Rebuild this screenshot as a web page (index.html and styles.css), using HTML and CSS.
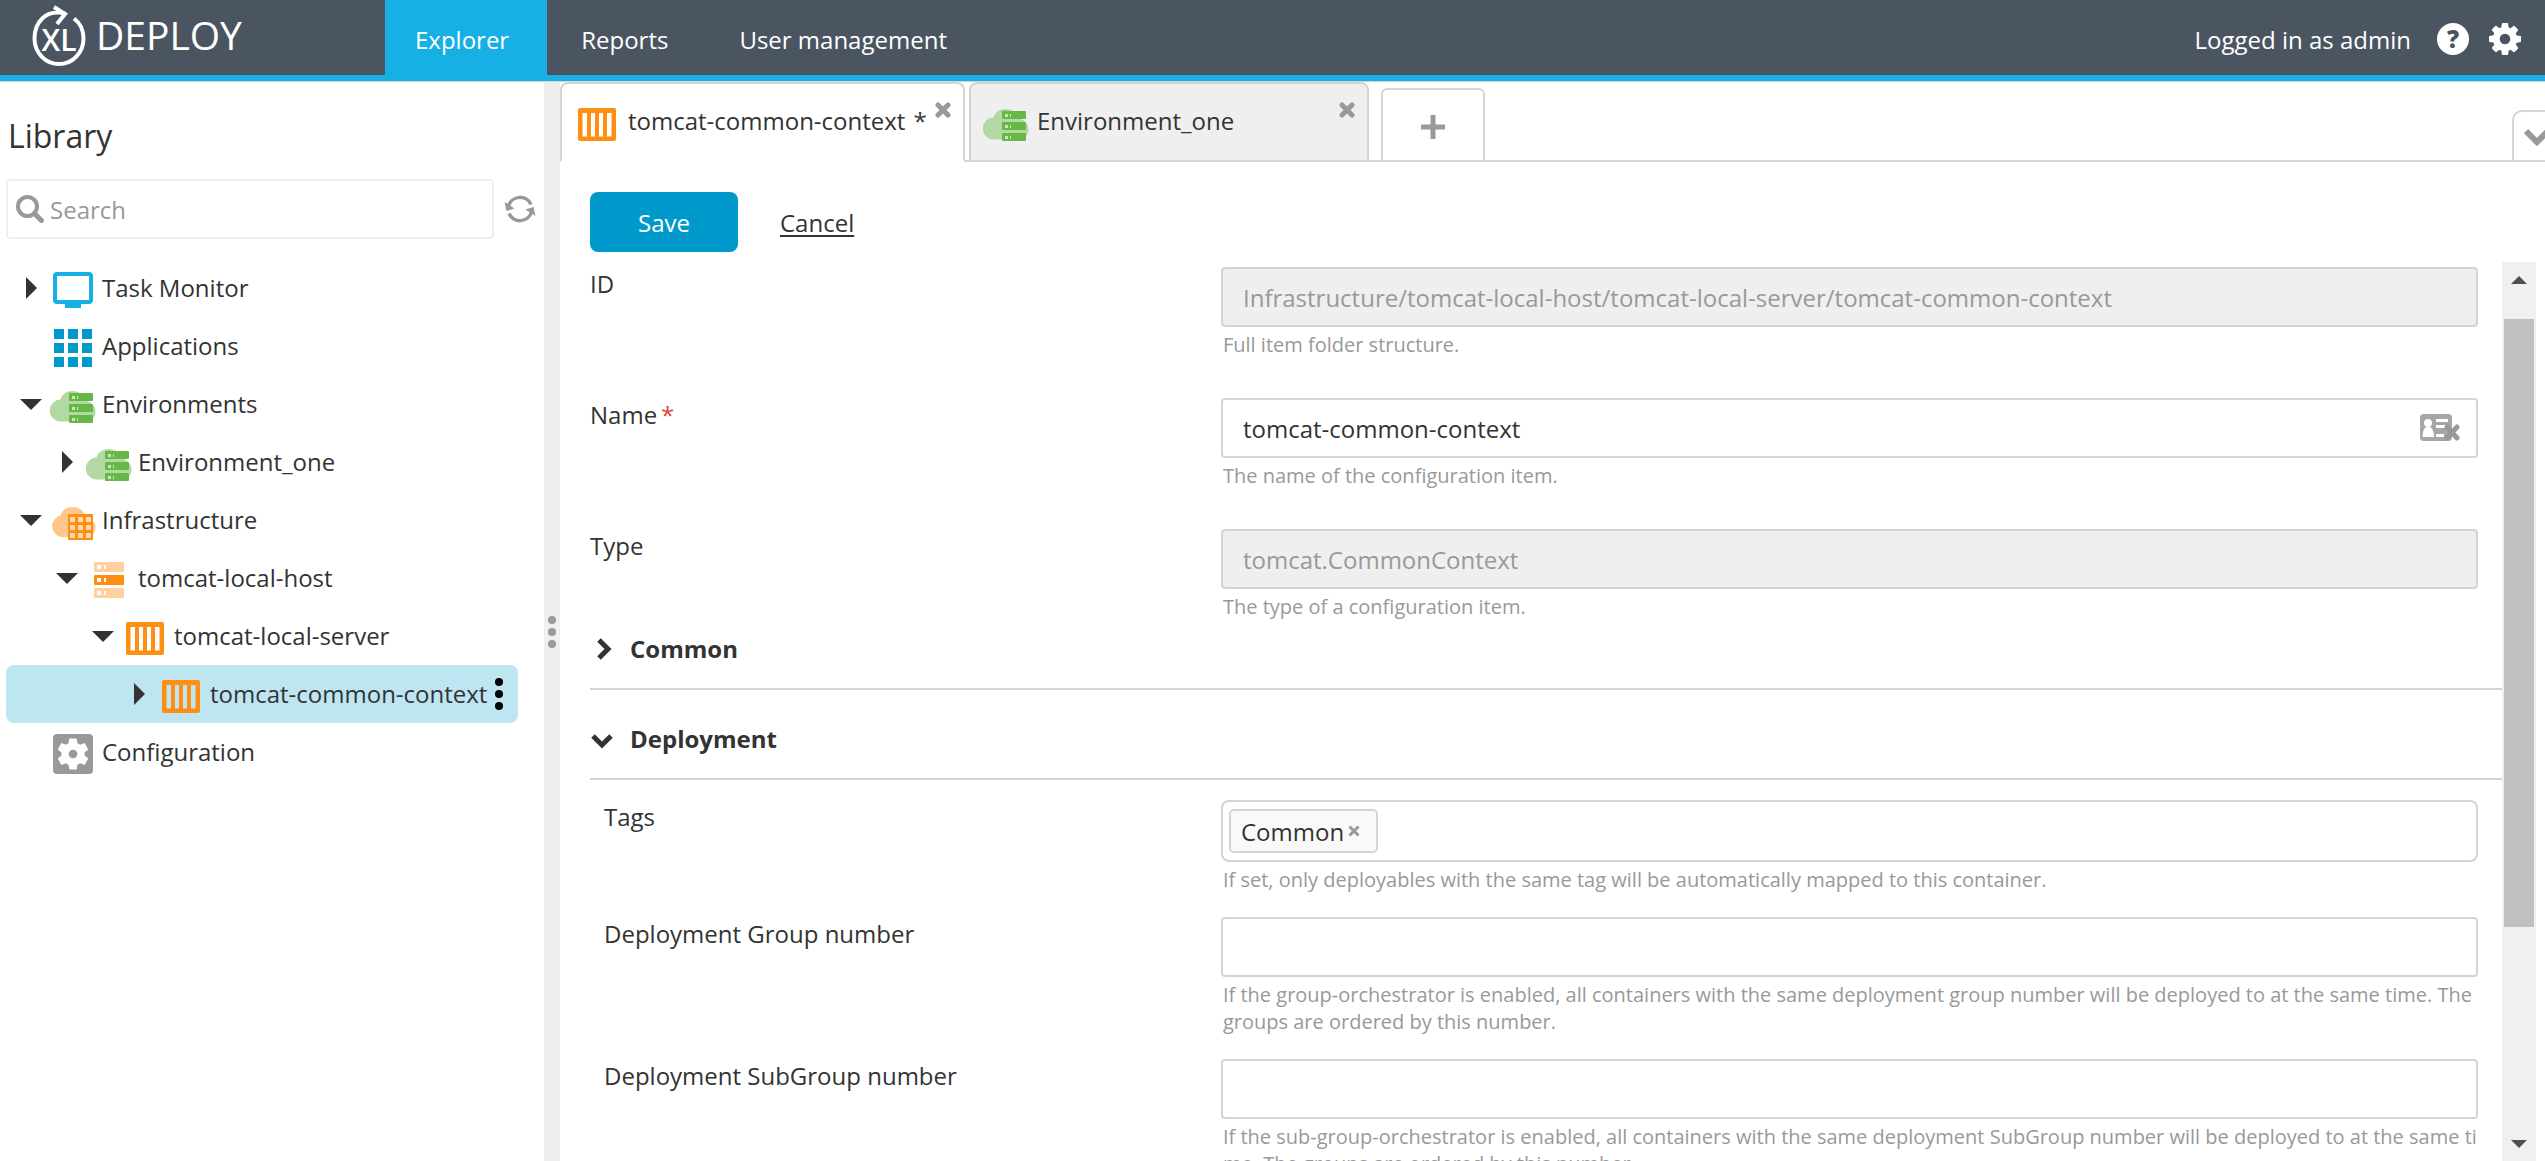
FILE: index.html
```html
<!DOCTYPE html>
<html lang="en">
<head>
<meta charset="utf-8">
<title>XL Deploy</title>
<link rel="stylesheet" href="styles.css">
</head>
<body>
<svg class="sprite" aria-hidden="true">
  <symbol id="i-monitor" viewBox="0 0 46 44">
    <rect x="5" y="8" width="36" height="28" rx="2" fill="none" stroke="#16b0e4" stroke-width="4"/>
    <path d="M15 37h16v5H15z" fill="#16b0e4"/>
  </symbol>
  <symbol id="i-apps" viewBox="0 0 46 44">
    <path fill="#0099cc" d="M4 5h10v10H4zM18 5h10v10H18zM32 5h10v10H32zM4 19h10v10H4zM18 19h10v10H18zM32 19h10v10H32zM4 33h10v10H4zM18 33h10v10H18zM32 33h10v10H32z"/>
  </symbol>
  <symbol id="i-env" viewBox="0 0 46 44">
    <path fill="#b1d9a1" d="M11 39.500A11 11 0 0 1 10.500 17.500C12 12 17 9 22.500 9C29 9 34 12.500 35 18.500C41 19 45.500 24 45.500 29.500C45.500 35 41 39.500 36 39.500z"/>
    <path fill="#68b749" d="M20 11h22a1 1 0 0 1 1 1v6a1 1 0 0 1-1 1H20a1 1 0 0 1-1-1v-6a1 1 0 0 1 1-1zM20 22h22a1 1 0 0 1 1 1v6a1 1 0 0 1-1 1H20a1 1 0 0 1-1-1v-6a1 1 0 0 1 1-1zM20 33h22a1 1 0 0 1 1 1v6a1 1 0 0 1-1 1H20a1 1 0 0 1-1-1v-6a1 1 0 0 1 1-1z"/>
    <path fill="#c9e6be" d="M22 14h3v3h-3zM27 14h1v3h-1zM22 25h3v3h-3zM27 25h1v3h-1zM22 36h3v3h-3zM27 36h1v3h-1z"/>
  </symbol>
  <symbol id="i-infra" viewBox="0 0 46 44">
    <path fill="#ffc68a" d="M11 39A11 11 0 0 1 10.500 17.500C12 12 17 9 22.500 9C29 9 34 12.500 35 18.500C41 19 45.500 24 45.500 29.500C45.500 35 41 39 36 39z"/>
    <rect x="18" y="16" width="25" height="26" rx="1" fill="#ff8f12"/>
    <path fill="#ffd9b0" d="M20 19h5v5h-5zM28 19h5v5h-5zM36 19h5v5h-5zM20 27h5v5h-5zM28 27h5v5h-5zM36 27h5v5h-5zM20 35h5v5h-5zM28 35h5v5h-5zM36 35h5v5h-5z"/>
  </symbol>
  <symbol id="i-host" viewBox="0 0 46 44">
    <rect x="8" y="6" width="30" height="10" rx="1" fill="#ffd0a0"/>
    <rect x="8" y="19" width="30" height="10" rx="1" fill="#ff8f12"/>
    <rect x="8" y="32" width="30" height="10" rx="1" fill="#ffd0a0"/>
    <path fill="#fff" d="M11 9h4v4h-4zM18 9h2v4h-2zM11 22h4v4h-4zM18 22h2v4h-2zM11 35h4v4h-4zM18 35h2v4h-2z"/>
  </symbol>
  <symbol id="i-container" viewBox="0 0 46 44">
    <path fill="#ff8f12" fill-rule="evenodd" d="M6 8h34a2 2 0 0 1 2 2v29a2 2 0 0 1-2 2H6a2 2 0 0 1-2-2V10a2 2 0 0 1 2-2zM8.500 13v23.500h4.500V13zM17 13v23.500h4V13zM25 13v23.500h4V13zM33 13v23.500h4.500V13z"/>
  </symbol>
  <symbol id="i-config" viewBox="0 0 46 44">
    <rect x="3" y="4" width="40" height="40" rx="4" fill="#999"/>
    <path fill="#fff" transform="translate(4.400 5.400) scale(1.550)" d="M19.430 12.980c.04-.32.07-.64.07-.98s-.03-.66-.07-.98l2.110-1.650c.19-.15.24-.42.12-.64l-2-3.460c-.12-.22-.39-.3-.61-.22l-2.490 1c-.52-.4-1.080-.73-1.690-.98l-.38-2.650C14.460 2.180 14.250 2 14 2h-4c-.25 0-.46.18-.49.42l-.38 2.650c-.61.25-1.170.59-1.690.98l-2.490-1c-.23-.09-.49 0-.61.22l-2 3.460c-.13.22-.07.49.12.64l2.110 1.650c-.04.32-.07.65-.07.98s.03.66.07.98l-2.110 1.650c-.19.15-.24.42-.12.64l2 3.460c.12.22.39.3.61.22l2.490-1c.52.4 1.080.73 1.690.98l.38 2.650c.03.24.24.42.49.42h4c.25 0 .46-.18.49-.42l.38-2.650c.61-.25 1.170-.59 1.690-.98l2.490 1c.23.09.49 0 .61-.22l2-3.460c.12-.22.07-.49-.12-.64l-2.110-1.650zM12 14.800a2.800 2.800 0 1 1 0-5.600 2.800 2.800 0 0 1 0 5.600z"/>
  </symbol>
  <symbol id="i-right" viewBox="0 0 26 24"><path d="M8 1l11 11L8 23z" fill="#333"/></symbol>
  <symbol id="i-down" viewBox="0 0 26 24"><path d="M2 7h22L13 18z" fill="#333"/></symbol>
  <symbol id="i-close" viewBox="0 0 16 16"><path d="M3 3l10 10M13 3L3 13" stroke="#999" stroke-width="5" stroke-linecap="round"/></symbol>
</svg>

<header class="topbar">
  <a class="brand" href="#" aria-label="XL Deploy">
    <svg class="brand-mark" width="56" height="62" viewBox="0 0 56 62" aria-hidden="true">
      <path d="M34 8.500C14 4 3.500 18 3.500 33.500a24.500 25.500 0 0 0 49 0C52.500 25 49 18 43 13.500" fill="none" stroke="#fff" stroke-width="4"/>
      <path d="M23 2L34 9L26 19" fill="none" stroke="#fff" stroke-width="4"/>
      <text x="28" y="46" text-anchor="middle" class="mark-text">XL</text>
    </svg>
    <span class="brand-name">DEPLOY</span>
  </a>
  <nav class="mainnav">
    <a class="mainnav-link is-active" href="#">Explorer</a>
    <a class="mainnav-link" href="#">Reports</a>
    <a class="mainnav-link" href="#">User management</a>
  </nav>
  <div class="account">
    <span>Logged in as admin</span>
    <button class="icon-btn" aria-label="Help">
      <svg width="32" height="32" viewBox="0 0 32 32"><circle cx="16" cy="16" r="16" fill="#fff"/><text x="16" y="25" text-anchor="middle" class="help-mark">?</text></svg>
    </button>
    <button class="icon-btn" aria-label="Settings">
      <svg width="32" height="32" viewBox="128 128 1536 1536"><path fill="#fff" d="M1152 896q0-106-75-181t-181-75-181 75-75 181 75 181 181 75 181-75 75-181zm512-109v222q0 12-8 23t-20 13l-185 28q-19 54-39 91 35 50 107 138 10 12 10 25t-9 23q-27 37-99 108t-94 71q-12 0-26-9l-138-108q-44 23-91 38-16 136-29 186-7 28-36 28h-222q-14 0-24.500-8.500t-11.500-21.500l-28-184q-49-16-90-37l-141 107q-10 9-25 9-14 0-25-11-126-114-165-168-7-10-7-23 0-12 8-23 15-21 51-66.500t54-70.500q-27-50-41-99l-183-27q-13-2-21-12.500t-8-23.500v-222q0-12 8-23t19-13l186-28q14-46 39-92-40-57-107-138-10-12-10-24 0-10 9-23 26-36 98.500-107.500t94.500-71.500q13 0 26 10l138 107q44-23 91-38 16-136 29-186 7-28 36-28h222q14 0 24.500 8.500t11.500 21.500l28 184q49 16 90 37l142-107q9-9 24-9 13 0 25 10 129 119 165 170 7 8 7 22 0 12-8 23-15 21-51 66.500t-54 70.500q26 50 41 98l183 28q13 2 21 12.500t8 23.500z"/></svg>
    </button>
  </div>
</header>

<div class="workspace">
  <aside class="sidebar">
    <h1 class="sidebar-title">Library</h1>
    <div class="search-row">
      <label class="search">
        <svg width="28" height="28" viewBox="0 0 28 28" aria-hidden="true"><circle cx="11.500" cy="11.500" r="9.500" fill="none" stroke="#999" stroke-width="4"/><path d="M18.500 18.500l7 7" stroke="#999" stroke-width="5" stroke-linecap="round"/></svg>
        <input type="search" placeholder="Search" aria-label="Search">
      </label>
      <button class="icon-btn" aria-label="Refresh">
        <svg width="32" height="28" viewBox="0 0 32 28"><path d="M4.500 11A12 12 0 0 1 27 9.500M27.500 17A12 12 0 0 1 5 18.500" fill="none" stroke="#999" stroke-width="3.500"/><path d="M0.500 7l2 9 8-2.500zM31.500 21l-2-9-8 2.500z" fill="#999"/></svg>
      </button>
    </div>
    <ul class="tree">
      <li class="node level-0"><svg class="toggle"><use href="#i-right"/></svg><svg class="node-icon"><use href="#i-monitor"/></svg><span>Task Monitor</span></li>
      <li class="node level-0"><span class="toggle"></span><svg class="node-icon"><use href="#i-apps"/></svg><span>Applications</span></li>
      <li class="node level-0"><svg class="toggle"><use href="#i-down"/></svg><svg class="node-icon"><use href="#i-env"/></svg><span>Environments</span></li>
      <li class="node level-1"><svg class="toggle"><use href="#i-right"/></svg><svg class="node-icon"><use href="#i-env"/></svg><span>Environment_one</span></li>
      <li class="node level-0"><svg class="toggle"><use href="#i-down"/></svg><svg class="node-icon"><use href="#i-infra"/></svg><span>Infrastructure</span></li>
      <li class="node level-1"><svg class="toggle"><use href="#i-down"/></svg><svg class="node-icon"><use href="#i-host"/></svg><span>tomcat-local-host</span></li>
      <li class="node level-2"><svg class="toggle"><use href="#i-down"/></svg><svg class="node-icon"><use href="#i-container"/></svg><span>tomcat-local-server</span></li>
      <li class="node level-3 is-selected"><svg class="toggle"><use href="#i-right"/></svg><svg class="node-icon"><use href="#i-container"/></svg><span>tomcat-common-context</span>
        <button class="icon-btn node-menu" aria-label="Item menu"><svg width="8" height="34" viewBox="0 0 8 34"><circle cx="4" cy="5" r="4"/><circle cx="4" cy="17" r="4"/><circle cx="4" cy="29" r="4"/></svg></button></li>
      <li class="node level-0"><span class="toggle"></span><svg class="node-icon"><use href="#i-config"/></svg><span>Configuration</span></li>
    </ul>
  </aside>

  <div class="splitter"><svg width="8" height="32" viewBox="0 0 8 32"><g fill="#999"><circle cx="4" cy="4" r="4"/><circle cx="4" cy="16" r="4"/><circle cx="4" cy="28" r="4"/></g></svg></div>

  <main class="editor">
    <div class="tabs">
      <div class="tab is-current"><svg class="node-icon"><use href="#i-container"/></svg><span class="tab-title">tomcat-common-context <span class="dirty">*</span></span><button class="icon-btn tab-close" aria-label="Close"><svg width="16" height="16"><use href="#i-close"/></svg></button></div>
      <div class="tab"><svg class="node-icon"><use href="#i-env"/></svg><span class="tab-title">Environment_one</span><button class="icon-btn tab-close" aria-label="Close"><svg width="16" height="16"><use href="#i-close"/></svg></button></div>
      <button class="tab-add" aria-label="New tab"><svg width="24" height="24" viewBox="0 0 24 24"><path d="M12 0v24M0 12h24" stroke="#999" stroke-width="5"/></svg></button>
      <button class="tab-more" aria-label="More tabs"><svg width="26" height="18" viewBox="0 0 26 18"><path d="M2 3l11 11L24 3" fill="none" stroke="#999" stroke-width="6"/></svg></button>
    </div>

    <form class="form">
      <div class="actions">
        <button class="save" type="button">Save</button>
        <a class="cancel" href="#">Cancel</a>
      </div>
      <div class="scroller">
        <div class="fields">
          <div class="group">
            <div class="field">
              <label for="id">ID</label>
              <div class="control"><input class="box" id="id" value="Infrastructure/tomcat-local-host/tomcat-local-server/tomcat-common-context" disabled><p class="help">Full item folder structure.</p></div>
            </div>
            <div class="field">
              <label for="name">Name<span class="required">*</span></label>
              <div class="control">
                <div class="with-icon"><input class="box" id="name" value="tomcat-common-context">
                  <svg class="card-icon" width="40" height="28" viewBox="0 0 40 28" aria-hidden="true"><rect width="32" height="27" rx="4" fill="#a6a6a6"/><circle cx="8" cy="9" r="4" fill="#fff"/><path d="M2.500 23C2.500 17 4.500 14 6 13h4c2 1 4 4 4 10zM16 5h12v3H16zM16 11h10v3H16zM16 20h8v3h-8z" fill="#fff"/><path d="M27 13l10 11M37 13L27 24" stroke="#999" stroke-width="5" stroke-linecap="round"/></svg>
                </div>
                <p class="help">The name of the configuration item.</p></div>
            </div>
            <div class="field">
              <label for="type">Type</label>
              <div class="control"><input class="box" id="type" value="tomcat.CommonContext" disabled><p class="help">The type of a configuration item.</p></div>
            </div>
          </div>

          <h2 class="section"><button type="button" aria-expanded="false"><svg width="24" height="24" viewBox="0 0 24 24"><path d="M9 3l9 9-9 9" fill="none" stroke="#333" stroke-width="5"/></svg>Common</button></h2>
          <h2 class="section"><button type="button" aria-expanded="true"><svg width="24" height="24" viewBox="0 0 24 24"><path d="M3 9l9 9 9-9" fill="none" stroke="#333" stroke-width="5"/></svg>Deployment</button></h2>

          <div class="group nested">
            <div class="field">
              <label for="tags">Tags</label>
              <div class="control">
                <div class="box tagbox"><span class="tag">Common<button class="icon-btn" type="button" aria-label="Remove Common"><svg width="12" height="12" viewBox="0 0 12 12"><path d="M1.500 1.500l9 9M10.500 1.500l-9 9" stroke="#999" stroke-width="3"/></svg></button></span><input id="tags"></div>
                <p class="help">If set, only deployables with the same tag will be automatically mapped to this container.</p></div>
            </div>
            <div class="field">
              <label for="grp">Deployment Group number</label>
              <div class="control"><input class="box" id="grp"><p class="help">If the group-orchestrator is enabled, all containers with the same deployment group number will be deployed to at the same time. The groups are ordered by this number.</p></div>
            </div>
            <div class="field">
              <label for="sub">Deployment SubGroup number</label>
              <div class="control"><input class="box" id="sub"><p class="help">If the sub-group-orchestrator is enabled, all containers with the same deployment SubGroup number will be deployed to at the same time. The groups are ordered by this number.</p></div>
            </div>
          </div>
        </div>
        <div class="scrollbar" aria-hidden="true">
          <svg width="16" height="8"><path d="M0 8L8 0l8 8z" fill="#505050"/></svg>
          <div class="track"><div class="thumb"></div></div>
          <svg width="16" height="8"><path d="M0 0l8 8 8-8z" fill="#505050"/></svg>
        </div>
      </div>
    </form>
  </main>
</div>
</body>
</html>
```

FILE: styles.css
```css
* { box-sizing: border-box; }

body {
  margin: 0;
  height: 100vh;
  display: flex;
  flex-direction: column;
  overflow: hidden;
  font: 24px/33px "Open Sans", "Noto Sans", sans-serif;
  color: #333;
  background: #fff;
}

button, input { font: inherit; color: inherit; }
button { cursor: pointer; }
h1, h2, p, ul { margin: 0; padding: 0; }
svg { display: block; flex: none; }
.sprite { position: absolute; width: 0; height: 0; }

.icon-btn { padding: 0; border: 0; background: none; flex: none; }

/* Top bar */
.topbar {
  display: flex;
  flex: none;
  height: 82px;
  background: #4a5561;
  border-bottom: 1px solid #d4d4d4;
  box-shadow: inset 0 -6px #16b0e4;
  color: #fff;
}
.brand {
  display: flex;
  width: 385px;
  padding: 5px 0 0 31px;
  gap: 9px;
  color: #fff;
  text-decoration: none;
}
.brand-name { font-size: 39px; line-height: 60px; }
.mark-text { font-size: 30px; font-weight: 600; fill: #fff; }
.mainnav { display: flex; }
.mainnav-link {
  display: flex;
  align-items: center;
  padding: 0 37px 2px 34px;
  color: #fff;
  text-decoration: none;
}
.mainnav-link.is-active { padding: 0 38px 2px 30px; background: #16b0e4; }
.account {
  display: flex;
  align-items: center;
  margin-left: auto;
  padding: 0 24px 4px 0;
  gap: 20px;
}
.account span { padding: 2px 6px 0 0; }
.help-mark { font-size: 24px; font-weight: 800; fill: #4a5561; }

/* Library */
.workspace { display: flex; flex: 1; min-height: 0; }
.sidebar { width: 544px; flex: none; padding: 32px 8px 0 6px; }
.sidebar-title {
  font-size: 32px;
  line-height: 44px;
  font-weight: 400;
  padding-left: 2px;
  margin-bottom: 21px;
}
.search-row { display: flex; align-items: center; gap: 10px; margin-bottom: 20px; }
.search {
  display: flex;
  align-items: center;
  flex: 1;
  gap: 6px;
  height: 60px;
  padding: 0 8px;
  border: 2px solid #efefef;
  border-radius: 4px;
}
.search input { flex: 1; min-width: 0; padding: 0; border: 0; outline: 0; background: none; }
.search input::placeholder { color: #999; opacity: 1; }

.tree { list-style: none; }
.node {
  display: flex;
  align-items: center;
  height: 58px;
  margin-right: 18px;
  padding-left: 12px;
  border-radius: 8px;
  white-space: nowrap;
}
.node > span { padding-bottom: 2px; }
.level-1 { padding-left: 48px; }
.level-2 { padding-left: 84px; }
.level-3 { padding-left: 120px; }
.node.is-selected { background: #bee5f2; }
.toggle { width: 26px; height: 24px; margin-right: 6px; flex: none; }
.node-icon { width: 46px; height: 44px; margin-right: 6px; }
.node-menu { margin-left: 8px; }

.splitter {
  display: flex;
  align-items: center;
  justify-content: center;
  width: 16px;
  flex: none;
  padding-top: 20px;
  background: #efefef;
}

/* Tabs */
.editor { display: flex; flex-direction: column; flex: 1; min-width: 0; }
.tabs {
  display: flex;
  align-items: flex-end;
  flex: none;
  height: 80px;
  overflow: hidden;
  box-shadow: inset 0 -2px #d4d4d4;
}
.tab {
  display: flex;
  align-items: center;
  width: 400px;
  height: 80px;
  margin-right: 12px;
  padding: 0 12px;
  border: 2px solid #d4d4d4;
  border-radius: 8px 8px 0 0;
  background: #efefef;
}
.tab.is-current {
  width: 405px;
  margin-right: 4px;
  background: #fff;
  border-bottom-color: #fff;
}
.tab-title { padding: 0 0 3px 2px; white-space: nowrap; }
.dirty { margin-left: 2px; }
.tab-close { align-self: flex-start; margin: 18px 0 0 auto; }
.tab-add {
  display: grid;
  place-items: center;
  width: 104px;
  height: 74px;
  padding: 4px 0 0;
  border: 2px solid #d4d4d4;
  border-radius: 6px 6px 0 0;
  background: #fff;
}
.tab-more {
  width: 48px;
  height: 52px;
  margin: 0 -15px 0 auto;
  padding: 2px 0 0 10px;
  border: 2px solid #d4d4d4;
  border-radius: 10px 10px 0 0;
  background: #fff;
}

/* Form */
.form { display: flex; flex-direction: column; flex: 1; min-height: 0; padding-left: 30px; }
.actions { display: flex; align-items: center; gap: 42px; padding: 30px 0 10px; }
.save {
  width: 148px;
  height: 60px;
  border: 0;
  border-radius: 8px;
  background: #0099cc;
  color: #fff;
}
.cancel { color: inherit; text-underline-offset: 3px; }

.scroller { display: flex; flex: 1; min-height: 0; padding-right: 9px; }
.fields { flex: 1; min-width: 0; padding-top: 5px; overflow: hidden; }
.group { display: grid; gap: 40px; }
.group.nested { gap: 24px; padding-top: 20px; }
.field { display: grid; grid-template-columns: 33% 1fr; align-items: start; }
.nested label { padding-left: 14px; }
.required { color: #e0433a; padding-left: 4px; }
.control { min-width: 0; padding-right: 24px; }
.box {
  display: block;
  width: 100%;
  height: 60px;
  padding: 0 20px;
  border: 2px solid #d4d4d4;
  border-radius: 4px;
  background: #fff;
}
.box:disabled { background: #efefef; color: #999; }
.with-icon { position: relative; }
.card-icon { position: absolute; right: 18px; top: 16px; }
.help {
  margin-top: 4px;
  padding-left: 2px;
  font-size: 20px;
  line-height: 27px;
  color: #999;
  word-break: break-all;
}
.tagbox { display: flex; align-items: center; height: 62px; padding: 0 6px; border-radius: 8px; }
.tagbox input { flex: 1; border: 0; outline: 0; background: none; }
.tag {
  display: flex;
  align-items: center;
  gap: 4px;
  height: 44px;
  padding: 0 16px 0 10px;
  border: 2px solid #d4d4d4;
  border-radius: 5px;
  background: #f9f9f9;
}

.section { padding: 12px 0 23px; border-bottom: 2px solid #d4d4d4; font-size: 24px; line-height: 33px; }
.section + .section { padding-top: 32px; }
.section button {
  display: flex;
  align-items: center;
  gap: 16px;
  padding: 0;
  border: 0;
  background: none;
  font-weight: 700;
}

.scrollbar {
  display: flex;
  flex-direction: column;
  align-items: center;
  width: 34px;
  padding: 14px 0 13px;
  background: #f0f0f0;
}
.track { flex: 1; width: 30px; padding: 35px 0 31px; }
.thumb { height: 77%; background: #c0c0c0; }
```
